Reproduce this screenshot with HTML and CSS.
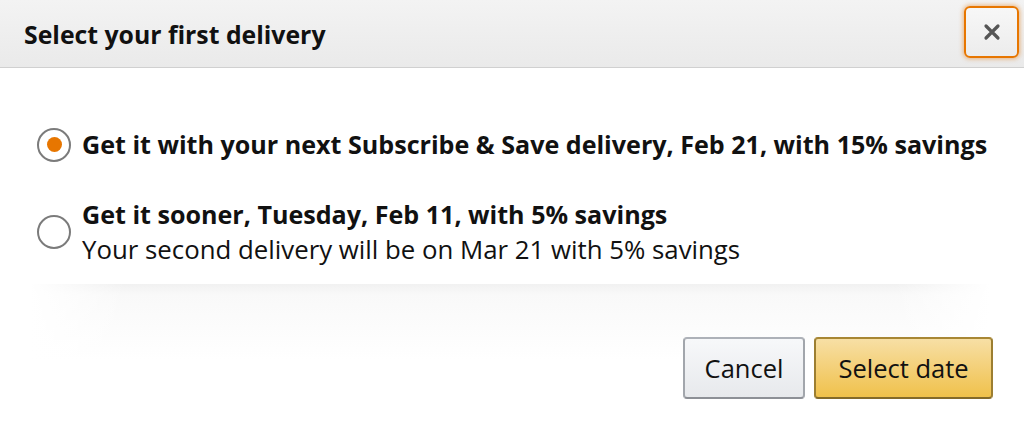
FILE: index.html
```html
<!DOCTYPE html>
<html lang="en">
<head>
    <meta charset="UTF-8">
    <meta name="viewport" content="width=device-width, initial-scale=1.0">
    <title>Select your first delivery</title>
    <link rel="stylesheet" href="styles.css">
</head>
<body>
    <div class="modal">
        <header class="modal-header">
            <h1>Select your first delivery</h1>
            <button class="close-btn" aria-label="Close">
                <svg width="18" height="18" viewBox="0 0 18 18">
                    <path d="M3 3 L15 15 M15 3 L3 15" stroke="#555" stroke-width="3.2" stroke-linecap="round"/>
                </svg>
            </button>
        </header>

        <div class="modal-body">
            <label class="option">
                <span class="radio checked"></span>
                <span class="option-text">
                    <span class="option-title">Get it with your next Subscribe &amp; Save delivery, Feb 21, with 15% savings</span>
                </span>
            </label>
            <label class="option">
                <span class="radio"></span>
                <span class="option-text">
                    <span class="option-title">Get it sooner, Tuesday, Feb 11, with 5% savings</span>
                    <span class="option-note">Your second delivery will be on Mar 21 with 5% savings</span>
                </span>
            </label>
        </div>

        <footer class="modal-footer">
            <button class="btn btn-secondary">Cancel</button>
            <button class="btn btn-primary">Select date</button>
        </footer>
    </div>
</body>
</html>
```

FILE: styles.css
```css
* {
    box-sizing: border-box;
}

body {
    margin: 0;
    font-family: "Open Sans", sans-serif;
    color: #111;
    background: #fff;
}

.modal {
    width: 1024px;
    height: 421px;
    overflow: hidden;
}

/* cabecera gris */
.modal-header {
    height: 68px;
    display: flex;
    align-items: center;
    justify-content: space-between;
    padding: 0 5px 0 24px;
    background: linear-gradient(to bottom, #f3f3f3, #eaeaea);
    border-bottom: 1px solid #d0d0d0;
}

.modal-header h1 {
    margin: 0;
    font-size: 24.8px;
    font-weight: 700;
    color: #111;
}

.close-btn {
    width: 55px;
    height: 52px;
    margin-top: -4px;
    display: flex;
    align-items: center;
    justify-content: center;
    background: linear-gradient(to bottom, #f7f7f7, #ececec);
    border: 2px solid #e77600;
    border-radius: 6px;
    box-shadow: 0 0 4px 1px rgba(228, 121, 17, 0.5);
    cursor: pointer;
    padding: 0;
}

.modal-body {
    padding: 59px 0 0 37px;
    display: flex;
    flex-direction: column;
    gap: 35px;
}

.option {
    display: flex;
    align-items: center;
    gap: 11px;
    cursor: pointer;
}

.radio {
    width: 34px;
    height: 34px;
    flex: none;
    border: 2px solid #7b7b7b;
    border-radius: 50%;
    background: #fff;
    display: flex;
    align-items: center;
    justify-content: center;
}

.radio.checked::after {
    content: "";
    width: 15px;
    height: 15px;
    border-radius: 50%;
    background: #e77600;
}

.option-text {
    display: flex;
    flex-direction: column;
    font-size: 25px;
    line-height: 35px;
}

.option-title {
    font-weight: 700;
    font-size: 25.1px;
}

.option-note {
    font-size: 25.8px;
}

.modal-footer {
    margin-top: 17px;
    height: 140px;
    display: flex;
    justify-content: flex-end;
    align-items: flex-start;
    gap: 9px;
    padding: 53px 31px 0 0;
    background:
        linear-gradient(to right, #fff, rgba(255,255,255,0) 10%, rgba(255,255,255,0) 90%, #fff),
        linear-gradient(to bottom, #f1f1f1, #f9f9f9 12%, #fff 85%);
    background-repeat: no-repeat;
    background-size: 960px 90px;
    background-position: 30px 0;
}

.btn {
    height: 62px;
    font-family: "Open Sans", sans-serif;
    font-size: 25.5px;
    color: #111;
    border-radius: 4px;
    border: 2px solid;
    cursor: pointer;
    padding: 0;
}

.btn-secondary {
    width: 122px;
    background: linear-gradient(to bottom, #f7f8fa, #e7e9ec);
    border-color: #adb1b8 #a2a6ac #8d9096;
}

.btn-primary {
    width: 179px;
    background: linear-gradient(to bottom, #f7dfa5, #f0c14b);
    border-color: #a88734 #9c7e31 #846a29;
}
```
